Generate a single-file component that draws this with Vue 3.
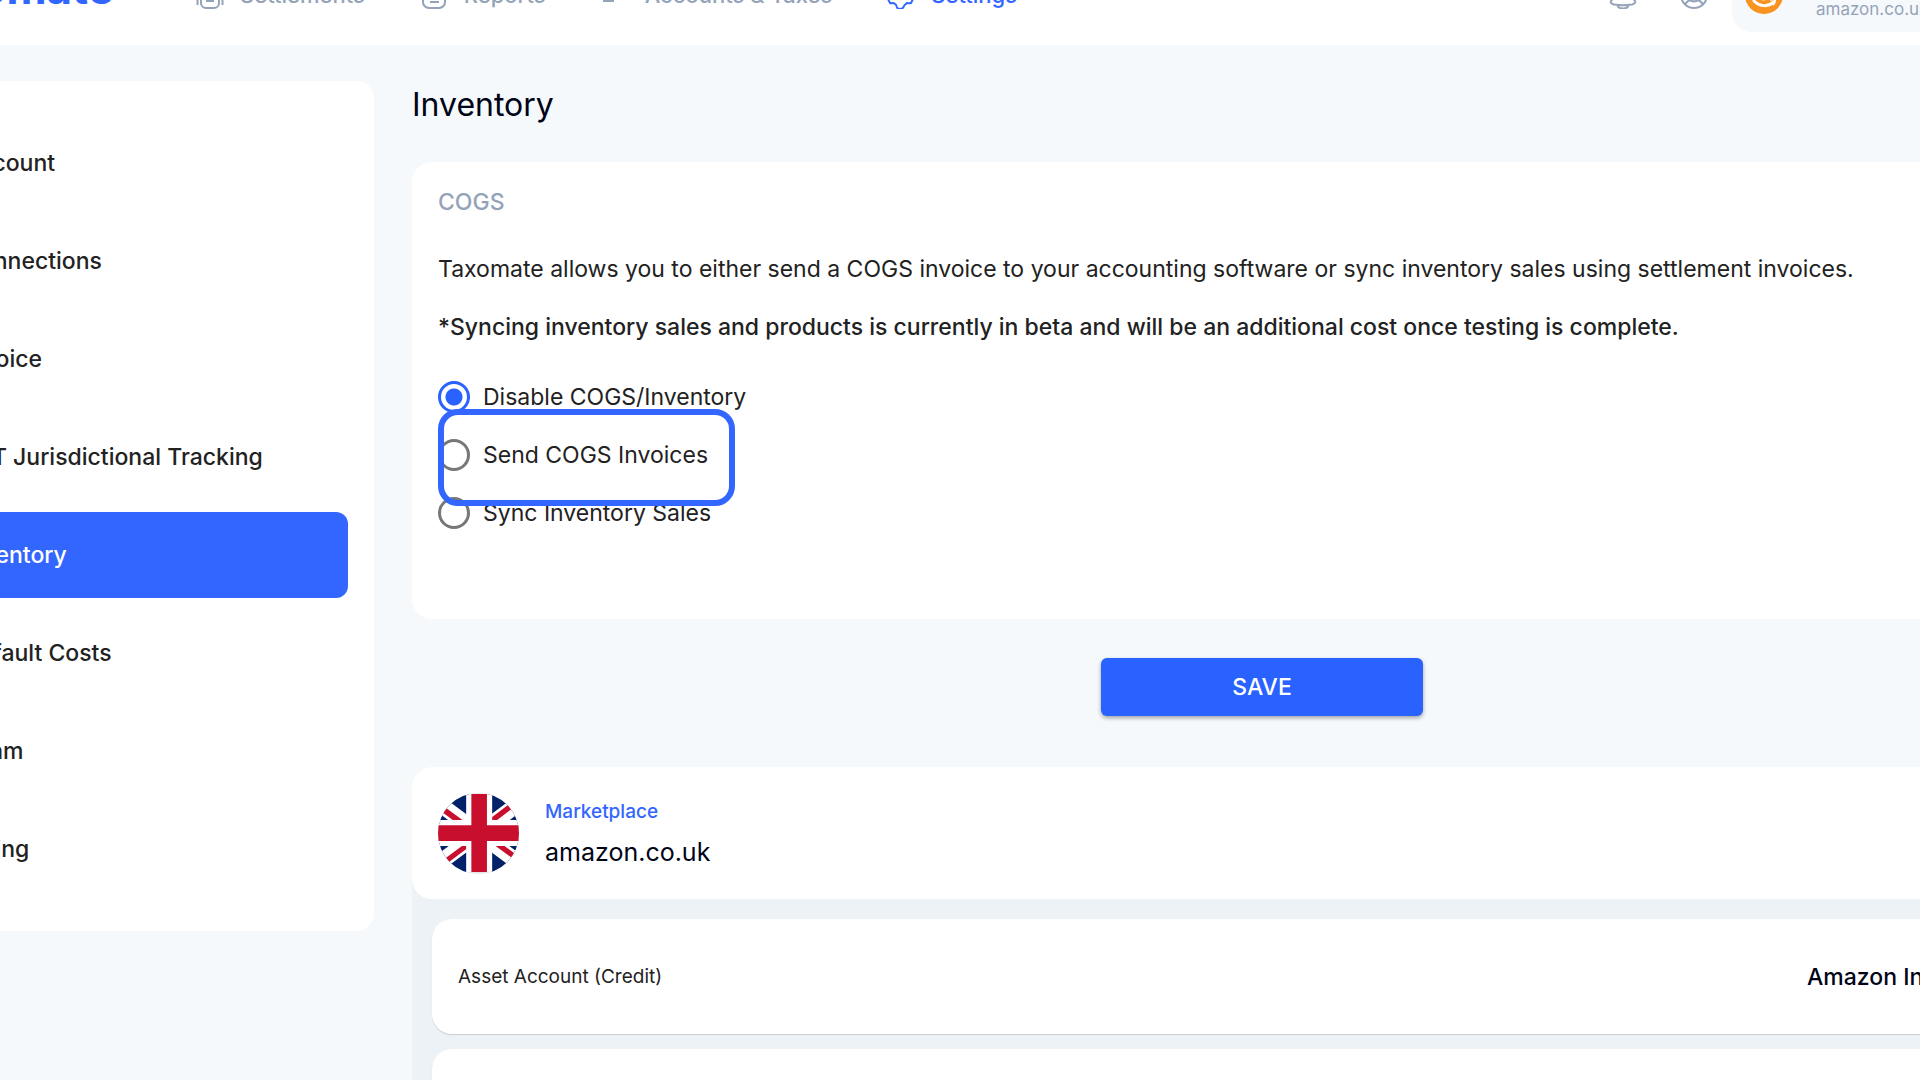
<script setup>
import { ref } from 'vue'

const sections = ['Account', 'Connections', 'Invoice', 'VAT Jurisdictional Tracking', 'Inventory', 'Default Costs', 'Team', 'Billing']
const current = 'Inventory'
const options = ['Disable COGS/Inventory', 'Send COGS Invoices', 'Sync Inventory Sales']
const mode = ref(options[0])
</script>

<template>
  <div class="page">
    <header class="topbar">
      <a class="logo" href="#">taxomate</a>
      <nav class="nav">
        <a href="#" class="nav-item">
          <svg viewBox="0 0 28 28" class="icon"><rect x="5" y="4" width="18" height="23" rx="5" /><path d="M1.500 8v16M26.500 8v16M11 15v5h6v-5" /></svg>
          <span>Settlements</span>
        </a>
        <a href="#" class="nav-item">
          <svg viewBox="0 0 28 28" class="icon"><rect x="3" y="3" width="22" height="24" rx="6" /><path d="M10 21h9M10 15h9" /></svg>
          <span>Reports</span>
        </a>
        <a href="#" class="nav-item">
          <svg viewBox="0 0 28 28" class="icon"><path d="M3 7v13h9V7" /></svg>
          <span>Accounts &amp; Taxes</span>
        </a>
        <a href="#" class="nav-item active">
          <svg viewBox="0 0 28 28" class="icon"><path d="M11 5l1-3h4l1 3 3 1 3-1 3 4-2 3v4l2 2-2 4c-2 1-4-1-5 1-2 0-2 4-4 4.500-1 .5-3 .5-4 0-2-.5-1-4.500-3-4.500-2-2-4 0-5-1l-2-4 2-2v-4L2 9l3-4 3 1z" /><circle cx="14" cy="14" r="4" /></svg>
          <span>Settings</span>
        </a>
      </nav>
      <div class="tools">
        <button class="tool" aria-label="Notifications">
          <svg viewBox="0 0 28 28" class="icon"><path d="M14 2c-5 0-8 4-8 8v5l-4 5c-1 2 1 3 3 3.500 6 1 12 1 18 0 2-.5 4-1.500 3-3.500l-4-5v-5c0-4-3-8-8-8zM8.500 24.500c1 4 10 4 11 0" /></svg>
        </button>
        <button class="tool" aria-label="Profile">
          <svg viewBox="0 0 28 28" class="icon"><circle cx="14" cy="14" r="13" /><circle cx="14" cy="10" r="4" /><path d="M5 23.500c4-7 14-7 18 0M10 19c2 2 6 2 8 0" /></svg>
        </button>
      </div>
      <button class="account">
        <svg viewBox="0 0 38 38" class="amazon"><circle cx="19" cy="19" r="19" fill="#f7931e" /><path d="M9 25c6 6 14 6 20 1" fill="none" stroke="#fff" stroke-width="3" stroke-linecap="round" /><path d="M25 24c3-1 6-1 5 0 0 2-1 4-2 5M14 22c3 2 8 2 10-1" fill="none" stroke="#fff" stroke-width="2" /></svg>
        <span class="account-text"><strong>Amazon</strong><span>amazon.co.uk</span></span>
      </button>
    </header>

    <div class="body">
      <nav class="sidebar">
        <a v-for="s in sections" :key="s" href="#" class="side-item" :class="{ selected: s === current }">{{ s }}</a>
      </nav>

      <main class="main">
        <h1>Inventory</h1>

        <section class="card cogs">
          <h2>COGS</h2>
          <p>Taxomate allows you to either send a COGS invoice to your accounting software or sync inventory sales using settlement invoices.</p>
          <p class="note">*Syncing inventory sales and products is currently in beta and will be an additional cost once testing is complete.</p>
          <div class="options">
            <label v-for="o in options" :key="o" class="option">
              <input v-model="mode" type="radio" name="mode" :value="o">
              <span>{{ o }}</span>
            </label>
            <div class="highlight"></div>
          </div>
        </section>

        <button class="save">SAVE</button>

        <section class="market">
          <div class="card market-head">
            <span class="flag">
              <svg viewBox="0 0 640 480"><path fill="#012169" d="M0 0h640v480H0z" /><path fill="#fff" d="m75 0 244 181L562 0h78v62L400 241l240 178v61h-80L320 301 81 480H0v-60l239-178L0 64V0z" /><path fill="#c8102e" d="m424 281 216 159v40L369 281zm-184 20 6 35L54 480H0zM640 0v3L391 191l2-44L590 0zM0 0l239 176h-60L0 42z" /><path fill="#fff" d="M241 0v480h160V0zM0 160v160h640V160z" /><path fill="#c8102e" d="M0 193v96h640v-96zM273 0v480h96V0z" /></svg>
            </span>
            <div>
              <div class="market-label">Marketplace</div>
              <div class="market-name">amazon.co.uk</div>
            </div>
          </div>
          <div class="card row">
            <span>Asset Account (Credit)</span>
            <strong>Amazon Inventory Asset Account</strong>
          </div>
          <div class="card row"></div>
        </section>
      </main>
    </div>
  </div>
</template>

<style>
body {
  margin: 0;
  background: #f5f9fc;
}
</style>

<style scoped>
* {
  box-sizing: border-box;
}

.page {
  height: 100vh;
  overflow: hidden;
  background: #f5f9fc;
  color: #222;
  font-family: Inter, "Liberation Sans", sans-serif;
  font-size: 23px;
  line-height: 28px;
}

a {
  color: inherit;
  text-decoration: none;
}

button {
  border: 0;
  font: inherit;
  cursor: pointer;
}

.topbar {
  display: flex;
  align-items: center;
  height: 100px;
  margin: -55px -80px 0 -100px;
  background: #fff;
  color: #94a3b8;
}

.logo {
  display: flex;
  justify-content: flex-end;
  width: 214px;
  padding-bottom: 14px;
  color: #36f;
  font-size: 44px;
  font-weight: 700;
  line-height: 48px;
  white-space: nowrap;
}

.nav {
  display: flex;
  gap: 55px;
  margin-left: 82px;
  font-size: 22px;
  font-weight: 500;
}

.nav-item {
  display: flex;
  align-items: center;
  gap: 16px;
  white-space: nowrap;
}

.active {
  color: #36f;
}

.icon {
  display: block;
  flex: none;
  width: 28px;
  height: 28px;
  fill: none;
  stroke: currentColor;
  stroke-width: 2;
}

.tools {
  display: flex;
  gap: 43px;
  margin-left: auto;
}

.tool {
  padding: 0;
  background: none;
  color: inherit;
}

.account {
  display: flex;
  align-items: center;
  gap: 33px;
  width: 268px;
  height: 74px;
  margin-left: 24px;
  padding: 0 13px;
  border-radius: 20px;
  background: #f5f9fc;
  color: #94a3b8;
  text-align: left;
}

.amazon {
  width: 38px;
  height: 38px;
}

.account-text {
  display: grid;
  font-size: 17px;
}

.body {
  display: flex;
  align-items: flex-start;
  gap: 38px;
  margin: 36px -192px 0 -86px;
}

.sidebar {
  display: flex;
  flex: none;
  flex-direction: column;
  gap: 12px;
  width: 460px;
  padding: 39px 26px;
  border-radius: 18px;
  background: #fff;
  font-weight: 500;
}

.side-item {
  padding: 29px 23px;
  border-radius: 12px;
  white-space: nowrap;
}

.selected {
  background: #36f;
  color: #fff;
}

.main {
  flex: 1;
  min-width: 0;
}

h1 {
  margin: 4px 0 37px;
  color: #000417;
  font-size: 32px;
  font-weight: 400;
  line-height: 40px;
}

.card {
  border-radius: 20px;
  background: #fff;
}

.cogs {
  padding: 26px 26px 77px;
}

h2 {
  margin: 0 0 39px;
  color: #94a3b8;
  font-size: 23px;
  font-weight: 500;
}

p {
  margin: 0 0 30px;
}

.note {
  margin-bottom: 27px;
  font-weight: 500;
}

.options {
  position: relative;
}

.option {
  display: flex;
  align-items: center;
  gap: 13px;
  height: 58px;
}

.option input {
  width: 32px;
  height: 32px;
  margin: 0;
  border: 3px solid #777;
  border-radius: 50%;
  appearance: none;
}

.option input:checked {
  border-color: #2962ff;
  background: radial-gradient(circle, #2962ff 8px, transparent 9px);
}

.highlight {
  position: absolute;
  top: 41px;
  left: 0;
  width: 297px;
  height: 97px;
  border: 6px solid #36f;
  border-radius: 20px;
  pointer-events: none;
}

.save {
  display: block;
  width: 322px;
  height: 58px;
  margin: 39px auto 51px;
  border-radius: 6px;
  background: #2962ff;
  box-shadow: 0 2px 4px rgba(0, 0, 0, 0.35);
  color: #fff;
  font-weight: 500;
}

.market {
  border-radius: 20px;
  background: #ecf2f6;
}

.market-head {
  display: flex;
  align-items: center;
  gap: 26px;
  height: 132px;
  padding: 0 26px;
}

.flag {
  display: flex;
  align-items: center;
  justify-content: center;
  width: 81px;
  height: 81px;
  overflow: hidden;
  border-radius: 50%;
  background: #e6e6e6;
}

.flag svg {
  flex: none;
  width: 104px;
  height: 78px;
}

.market-label {
  margin-bottom: 10px;
  color: #36f;
  font-size: 19px;
  font-weight: 500;
}

.market-name {
  color: #000417;
  font-size: 25px;
  line-height: 32px;
}

.row {
  display: flex;
  align-items: center;
  justify-content: space-between;
  height: 115px;
  margin: 20px 20px 15px;
  padding: 0 26px;
  box-shadow: 0 1px 1px rgba(0, 0, 0, 0.15);
  font-size: 19px;
}

.row + .row {
  margin-top: 0;
}

.row strong {
  flex: none;
  width: 259px;
  color: #000417;
  font-size: 23px;
  font-weight: 500;
  white-space: nowrap;
}
</style>
